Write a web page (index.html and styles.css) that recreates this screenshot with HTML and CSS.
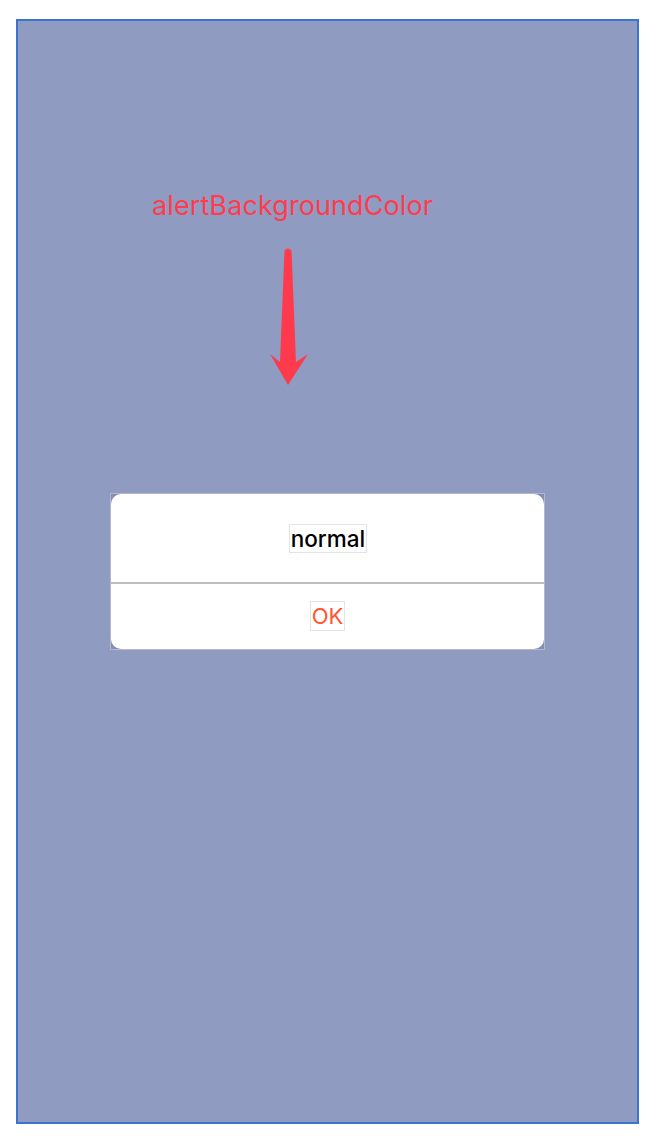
FILE: index.html
```html
<!DOCTYPE html>
<html>
<head>
<meta charset="utf-8">
<link rel="stylesheet" href="styles.css">
</head>
<body>
<div class="frame">
  <div class="caption">alertBackgroundColor</div>
  <svg class="arrow" width="40" height="140" viewBox="0 0 40 140">
    <path d="M14.5 4.5 Q18 0.5 21.5 4.5 L26 116 L38 108 L18 139 L0 108 L10 116 Z" fill="#ff3a4c"/>
  </svg>
  <div class="alert">
    <div class="alert-inner">
      <div class="alert-body"><span class="msg">normal</span></div>
      <div class="divider"></div>
      <div class="alert-actions"><span class="ok">OK</span></div>
    </div>
  </div>
</div>
</body>
</html>
```
FILE: styles.css
```css
html, body {
  margin: 0;
  padding: 0;
  background: #ffffff;
}
body {
  font-family: Inter, "Noto Sans", sans-serif;
  padding: 19px 0 0 16px;
}
.frame {
  box-sizing: border-box;
  width: 623px;
  height: 1105px;
  border: 2px solid #3d73cf;
  background: #909bc1;
  display: flex;
  flex-direction: column;
  align-items: flex-start;
}
.caption {
  margin-top: 167px;
  margin-left: 134px;
  color: #ff3b4e;
  font-size: 27px;
  line-height: 36px;
  letter-spacing: 0.1px;
}
.arrow {
  display: block;
  margin-top: 22px;
  margin-left: 252px;
}
.alert {
  align-self: center;
  margin-top: 107px;
  width: 435px;
  height: 157px;
  box-sizing: border-box;
  border: 1px solid #b4b8c8;
  background: #838db6;
}
.alert-inner {
  height: 100%;
  background: #ffffff;
  border-radius: 10px;
  display: flex;
  flex-direction: column;
}
.alert-body {
  height: 88px;
  display: flex;
  align-items: center;
  justify-content: center;
}
.msg {
  font-size: 22.5px;
  font-weight: 500;
  color: #000000;
  border: 1px solid #e4e4e4;
  padding: 0 1px;
  line-height: 27px;
  margin-left: 1px;
}
.divider {
  height: 2px;
  background: #bdbdbd;
}
.alert-actions {
  flex: 1;
  display: flex;
  align-items: center;
  justify-content: center;
  padding-bottom: 2px;
}
.ok {
  font-size: 22px;
  color: #ff5530;
  border: 1px solid #e4e4e4;
  padding: 0 1px;
  line-height: 28px;
}
```
